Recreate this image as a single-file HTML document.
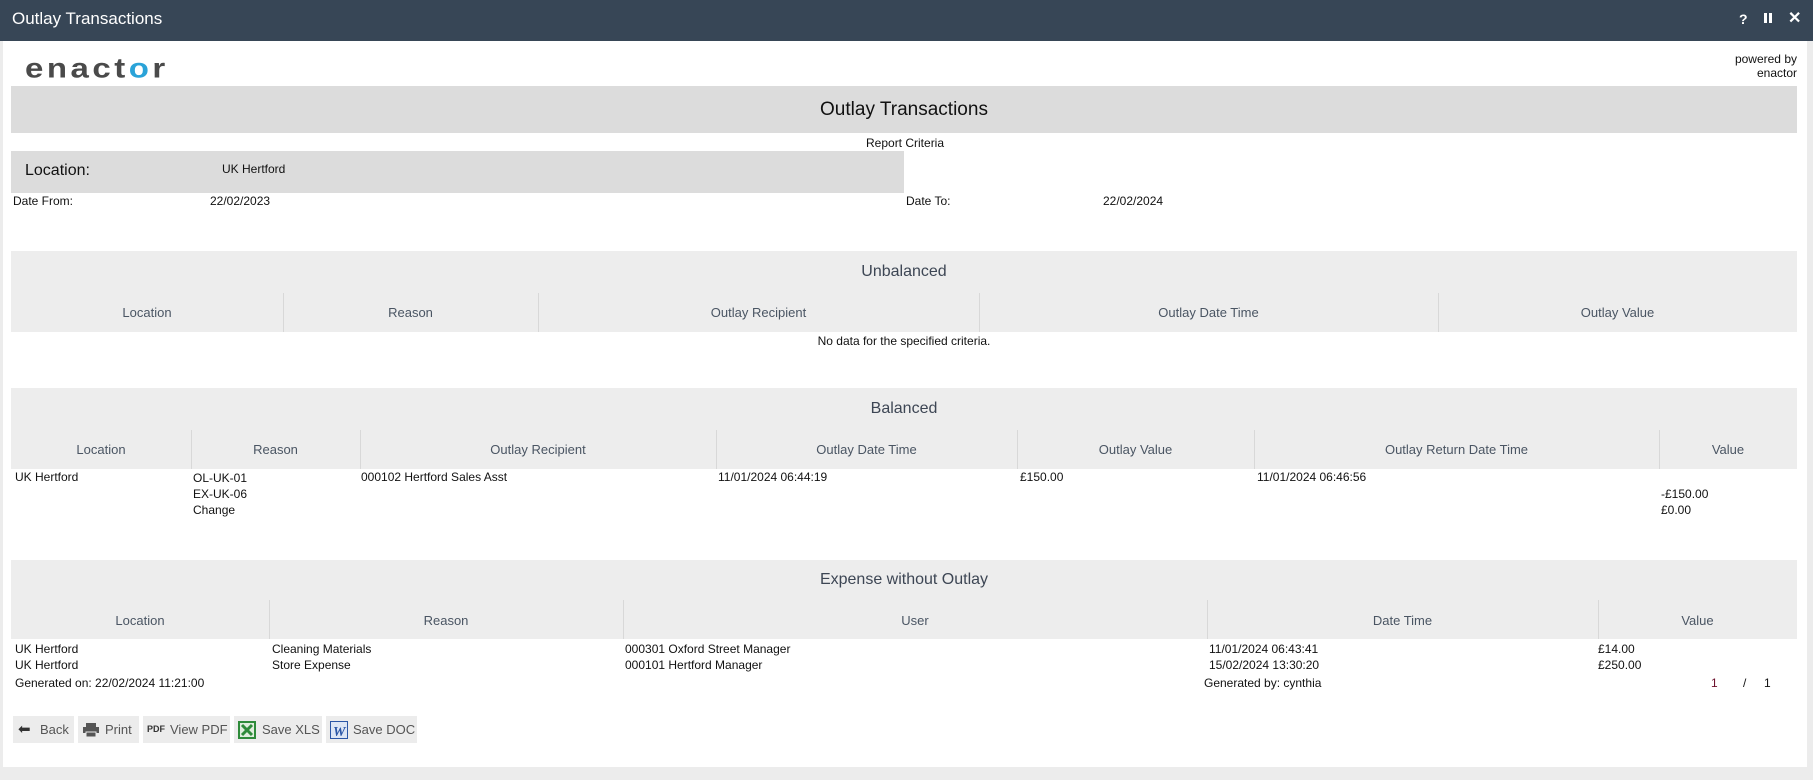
<!DOCTYPE html>
<html><head><style>
body{margin:0;width:1813px;height:780px;background:#ececec;font-family:"Liberation Sans",Arial,sans-serif;position:relative;overflow:hidden;font-size:12px;color:#111}
.a{position:absolute;white-space:nowrap}
.bar{position:absolute;left:0;top:0;width:1813px;height:41px;background:#374656;color:#fff}
.panel{position:absolute;left:3px;top:41px;width:1804px;height:726px;background:#fff}
.sec{position:absolute;left:11px;width:1786px;background:#ededed}
.hd{position:absolute;color:#4a5563;font-size:13px;text-align:center}
.tt{font-size:16px;color:#3d4654}
.dv{position:absolute;width:1px;background:#d8d8d8}
.btn{position:absolute;top:716px;height:27px;background:#ececec;color:#555;font-size:13px;line-height:27px}
</style></head><body>
<div class="bar">
<div class="a" style="left:12px;top:9px;font-size:17px">Outlay Transactions</div>
<div class="a" style="left:1739px;top:11px;font-size:14px;font-weight:bold">?</div>
<div class="a" style="left:1764px;top:13px;width:3px;height:10px;background:#fff"></div>
<div class="a" style="left:1769px;top:13px;width:3px;height:10px;background:#fff"></div>
<div class="a" style="left:1788px;top:8px;font-size:16px;font-weight:bold">✕</div>
</div>
<div class="panel"></div>
<div class="a" style="left:25px;top:49px;font-size:33px;color:#4a4a4a;letter-spacing:3.5px;font-weight:bold;transform:scaleY(0.85)">enact<span style="color:#2aa3d8">o</span>r</div>
<div class="a" style="left:1700px;top:52px;text-align:right;width:97px;font-size:12px;line-height:14px">powered by<br>enactor</div>
<div class="a" style="left:11px;top:86px;width:1786px;height:47px;background:#dcdcdc;text-align:center;line-height:47px;font-size:19px;color:#111">Outlay Transactions</div>
<div class="a" style="left:866px;top:136px;font-size:12px">Report Criteria</div>
<div class="a" style="left:11px;top:151px;width:893px;height:42px;background:#dcdcdc"></div>
<div class="a" style="left:25px;top:162px;font-size:16px">Location:</div>
<div class="a" style="left:222px;top:162px">UK Hertford</div>
<div class="a" style="left:13px;top:194px">Date From:</div>
<div class="a" style="left:210px;top:194px">22/02/2023</div>
<div class="a" style="left:906px;top:194px">Date To:</div>
<div class="a" style="left:1103px;top:194px">22/02/2024</div>

<div class="sec" style="top:251px;height:81px"></div>
<div class="hd tt" style="left:11px;width:1786px;top:263px">Unbalanced</div>
<div class="dv" style="left:283px;top:293px;height:39px"></div><div class="dv" style="left:538px;top:293px;height:39px"></div><div class="dv" style="left:979px;top:293px;height:39px"></div><div class="dv" style="left:1438px;top:293px;height:39px"></div>
<div class="hd" style="left:11px;width:272px;top:305px">Location</div>
<div class="hd" style="left:283px;width:255px;top:305px">Reason</div>
<div class="hd" style="left:538px;width:441px;top:305px">Outlay Recipient</div>
<div class="hd" style="left:979px;width:459px;top:305px">Outlay Date Time</div>
<div class="hd" style="left:1438px;width:359px;top:305px">Outlay Value</div>
<div class="a" style="left:11px;width:1786px;text-align:center;top:334px">No data for the specified criteria.</div>

<div class="sec" style="top:388px;height:81px"></div>
<div class="hd tt" style="left:11px;width:1786px;top:400px">Balanced</div>
<div class="dv" style="left:191px;top:430px;height:39px"></div><div class="dv" style="left:360px;top:430px;height:39px"></div><div class="dv" style="left:716px;top:430px;height:39px"></div><div class="dv" style="left:1017px;top:430px;height:39px"></div><div class="dv" style="left:1254px;top:430px;height:39px"></div><div class="dv" style="left:1659px;top:430px;height:39px"></div>
<div class="hd" style="left:11px;width:180px;top:442px">Location</div>
<div class="hd" style="left:191px;width:169px;top:442px">Reason</div>
<div class="hd" style="left:360px;width:356px;top:442px">Outlay Recipient</div>
<div class="hd" style="left:716px;width:301px;top:442px">Outlay Date Time</div>
<div class="hd" style="left:1017px;width:237px;top:442px">Outlay Value</div>
<div class="hd" style="left:1254px;width:405px;top:442px">Outlay Return Date Time</div>
<div class="hd" style="left:1659px;width:138px;top:442px">Value</div>
<div class="a" style="left:15px;top:470px">UK Hertford</div>
<div class="a" style="left:193px;top:470px;line-height:16px">OL-UK-01<br>EX-UK-06<br>Change</div>
<div class="a" style="left:361px;top:470px">000102 Hertford Sales Asst</div>
<div class="a" style="left:718px;top:470px">11/01/2024 06:44:19</div>
<div class="a" style="left:1020px;top:470px">£150.00</div>
<div class="a" style="left:1257px;top:470px">11/01/2024 06:46:56</div>
<div class="a" style="left:1661px;top:486px;line-height:16px">-£150.00<br>£0.00</div>

<div class="sec" style="top:560px;height:79px"></div>
<div class="hd tt" style="left:11px;width:1786px;top:571px">Expense without Outlay</div>
<div class="dv" style="left:269px;top:600px;height:39px"></div><div class="dv" style="left:623px;top:600px;height:39px"></div><div class="dv" style="left:1207px;top:600px;height:39px"></div><div class="dv" style="left:1598px;top:600px;height:39px"></div>
<div class="hd" style="left:11px;width:258px;top:613px">Location</div>
<div class="hd" style="left:269px;width:354px;top:613px">Reason</div>
<div class="hd" style="left:623px;width:584px;top:613px">User</div>
<div class="hd" style="left:1207px;width:391px;top:613px">Date Time</div>
<div class="hd" style="left:1598px;width:199px;top:613px">Value</div>
<div class="a" style="left:15px;top:641px;line-height:16px">UK Hertford<br>UK Hertford</div>
<div class="a" style="left:272px;top:641px;line-height:16px">Cleaning Materials<br>Store Expense</div>
<div class="a" style="left:625px;top:641px;line-height:16px">000301 Oxford Street Manager<br>000101 Hertford Manager</div>
<div class="a" style="left:1209px;top:641px;line-height:16px">11/01/2024 06:43:41<br>15/02/2024 13:30:20</div>
<div class="a" style="left:1598px;top:641px;line-height:16px">£14.00<br>£250.00</div>
<div class="a" style="left:15px;top:676px">Generated on: 22/02/2024 11:21:00</div>
<div class="a" style="left:1204px;top:676px">Generated by: cynthia</div>
<div class="a" style="left:1711px;top:676px;color:#6b0e2a">1</div>
<div class="a" style="left:1743px;top:676px">/</div>
<div class="a" style="left:1764px;top:676px">1</div>

<div class="btn" style="left:13px;width:61px"><span class="a" style="left:5px;top:0;font-size:15px;color:#333">⬅</span><span class="a" style="left:27px">Back</span></div>
<div class="btn" style="left:78px;width:61px"><svg class="a" style="left:5px;top:7px" width="16" height="14"><rect x="3" y="0" width="10" height="4" fill="#555"/><rect x="0" y="4" width="16" height="6" fill="#555"/><rect x="3" y="9" width="10" height="5" fill="#555" stroke="#ececec"/></svg><span class="a" style="left:27px">Print</span></div>
<div class="btn" style="left:143px;width:87px"><span class="a" style="left:4px;font-size:9px;font-weight:bold;color:#333">PDF</span><span class="a" style="left:27px">View PDF</span></div>
<div class="btn" style="left:234px;width:88px"><svg class="a" style="left:4px;top:5px" width="18" height="18"><rect width="18" height="18" fill="#2e8b3a"/><rect x="2" y="2" width="14" height="14" fill="#dfeedd"/><path d="M4 4L14 14M14 4L4 14" stroke="#2e8b3a" stroke-width="3"/></svg><span class="a" style="left:28px">Save XLS</span></div>
<div class="btn" style="left:326px;width:91px"><svg class="a" style="left:4px;top:5px" width="18" height="18"><rect width="18" height="18" fill="#2b56a6"/><rect x="1" y="1" width="16" height="16" fill="#dde6f5"/><text x="3" y="15" font-size="14" font-weight="bold" font-style="italic" fill="#2b56a6" font-family="Liberation Serif">W</text></svg><span class="a" style="left:27px">Save DOC</span></div>
</body></html>
